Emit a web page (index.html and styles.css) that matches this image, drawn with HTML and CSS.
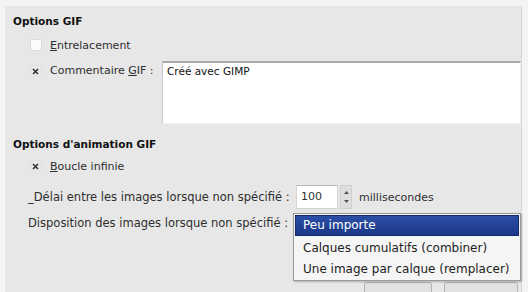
FILE: index.html
```html
<!DOCTYPE html>
<html lang="fr">
<head>
    <meta charset="UTF-8">
    <title>Enregistrer en GIF</title>
    <link rel="stylesheet" href="styles.css">
</head>
<body>
    <div class="dialog">
        <div class="section-title">Options GIF</div>

        <div class="check-row row-interlace">
            <span class="check"></span>
            <span class="label"><u>E</u>ntrelacement</span>
        </div>

        <div class="comment-row">
            <span class="check checked">
                <svg width="7" height="7" viewBox="0 0 7 7"><path d="M1 1L6 6M6 1L1 6" stroke="#333" stroke-width="1.6"/></svg>
            </span>
            <span class="label comment-label">Commentaire <u>G</u>IF :</span>
            <div class="comment-box">Créé avec GIMP</div>
        </div>

        <div class="section-title second">Options d'animation GIF</div>

        <div class="check-row row-loop">
            <span class="check checked">
                <svg width="7" height="7" viewBox="0 0 7 7"><path d="M1 1L6 6M6 1L1 6" stroke="#333" stroke-width="1.6"/></svg>
            </span>
            <span class="label"><u>B</u>oucle infinie</span>
        </div>

        <div class="field-row row-delay">
            <span class="field-label">_Délai entre les images lorsque non spécifié :</span>
            <div class="spin">
                <span class="spin-value">100</span>
                <span class="spin-arrows">
                    <svg width="7" height="18" viewBox="0 0 7 18"><path d="M1 6L3.5 3L6 6Z M1 12L3.5 15L6 12Z" fill="#555"/></svg>
                </span>
            </div>
            <span class="unit">millisecondes</span>
        </div>

        <div class="field-row row-dispose">
            <span class="field-label">Disposition des images lorsque non spécifié :</span>
        </div>

        <div class="buttons">
            <span class="btn"></span>
            <span class="btn wide"></span>
        </div>

        <!-- menu déroulant ouvert par-dessus la combo -->
        <div class="popup">
            <div class="popup-item selected">Peu importe</div>
            <div class="popup-item">Calques cumulatifs (combiner)</div>
            <div class="popup-item">Une image par calque (remplacer)</div>
        </div>
    </div>
</body>
</html>
```

FILE: styles.css
```css
body {
    margin: 0;
    background-color: #f4f4f4;
    font-family: "DejaVu Sans", sans-serif;
    font-size: 11px;
    color: #2e2e2e;
    width: 528px;
    height: 292px;
    overflow: hidden;
}

.dialog {
    position: relative;
    margin: 6px 6px 0 5px;
    height: 286px;
    background-color: #e7e7e7;
    border-right: 1px solid #d8d8d8;
    display: flex;
    flex-direction: column;
}

.section-title {
    font-weight: bold;
    font-size: 10.5px;
    color: #111;
    padding-left: 8px;
    margin-top: 8px;
    height: 14px;
    line-height: 14px;
}

.section-title.second {
    margin-top: 13px;
}

u {
    text-decoration: underline;
    text-underline-offset: 1px;
}

.check-row {
    display: flex;
    align-items: center;
    height: 20px;
    padding-left: 25px;
}

.row-interlace {
    margin-top: 7px;
}

.row-loop {
    margin-top: 5px;
}

.check {
    width: 10px;
    height: 10px;
    border: 1px solid #dcdcdc;
    background-color: #fbfbfb;
    margin-right: 8px;
    display: flex;
    align-items: center;
    justify-content: center;
    flex: none;
}

.check.checked {
    background-color: #e7e7e7;
    border-color: #e2e2e2;
    justify-content: flex-start;
    padding-left: 1px;
    width: 9px;
}

.comment-row {
    display: flex;
    align-items: flex-start;
    padding-left: 25px;
    margin-top: 6px;
}

.comment-row .check {
    margin-top: 4px;
}

.comment-label {
    margin-top: 3px;
    width: 112px;
    flex: none;
}

.comment-box {
    width: 353px;
    height: 56px;
    background-color: #fff;
    border-top: 2px solid #a9a9a9;
    border-left: 1px solid #c8c8c8;
    border-right: 1px solid #f0f0f0;
    border-bottom: 1px solid #f0f0f0;
    padding: 2px 4px;
    font-size: 10.5px;
    color: #111;
}

.field-row {
    display: flex;
    align-items: center;
    padding-left: 23px;
    height: 26px;
    font-size: 11.5px;
}

.row-delay {
    margin-top: 8px;
}

.field-label {
    width: 268px;
    flex: none;
}

.spin {
    display: flex;
    align-items: center;
    height: 24px;
    font-size: 11px;
}

.spin-value {
    width: 36px;
    height: 22px;
    line-height: 22px;
    padding-left: 4px;
    background-color: #fff;
    border: 1px solid #d4d4d4;
    border-top-color: #b8b8b8;
}

.spin-arrows {
    width: 10px;
    height: 22px;
    margin-left: 2px;
    background-color: #dedede;
    border: 1px solid #cfcfcf;
    display: flex;
    align-items: center;
    justify-content: center;
}

.unit {
    margin-left: 7px;
    font-size: 11px;
}

.buttons {
    margin-top: auto;
    display: flex;
    justify-content: flex-end;
    gap: 12px;
    padding-right: 3px;
    height: 10px;
}

.btn {
    width: 66px;
    height: 20px;
    background-color: #e2e2e2;
    border: 1px solid #b3b3b3;
    border-radius: 3px;
}

.btn.wide {
    width: 72px;
}

.popup {
    position: absolute;
    left: 288px;
    top: 207px;
    width: 226px;
    background-color: #f5f5f5;
    border: 1px solid #9a9a9a;
    box-shadow: 1px 1px 2px rgba(0, 0, 0, 0.25);
    padding: 1px 0 0;
    font-size: 12px;
}

.popup-item {
    height: 21px;
    line-height: 21px;
    padding-left: 9px;
    color: #222;
}

.popup-item.selected {
    height: 19px;
    line-height: 19px;
    margin: 0 1px 2px;
    padding-left: 7px;
    color: #fff;
    background: linear-gradient(#2b4fa6, #1b3787);
    border: 1px solid #15286a;
}
```
